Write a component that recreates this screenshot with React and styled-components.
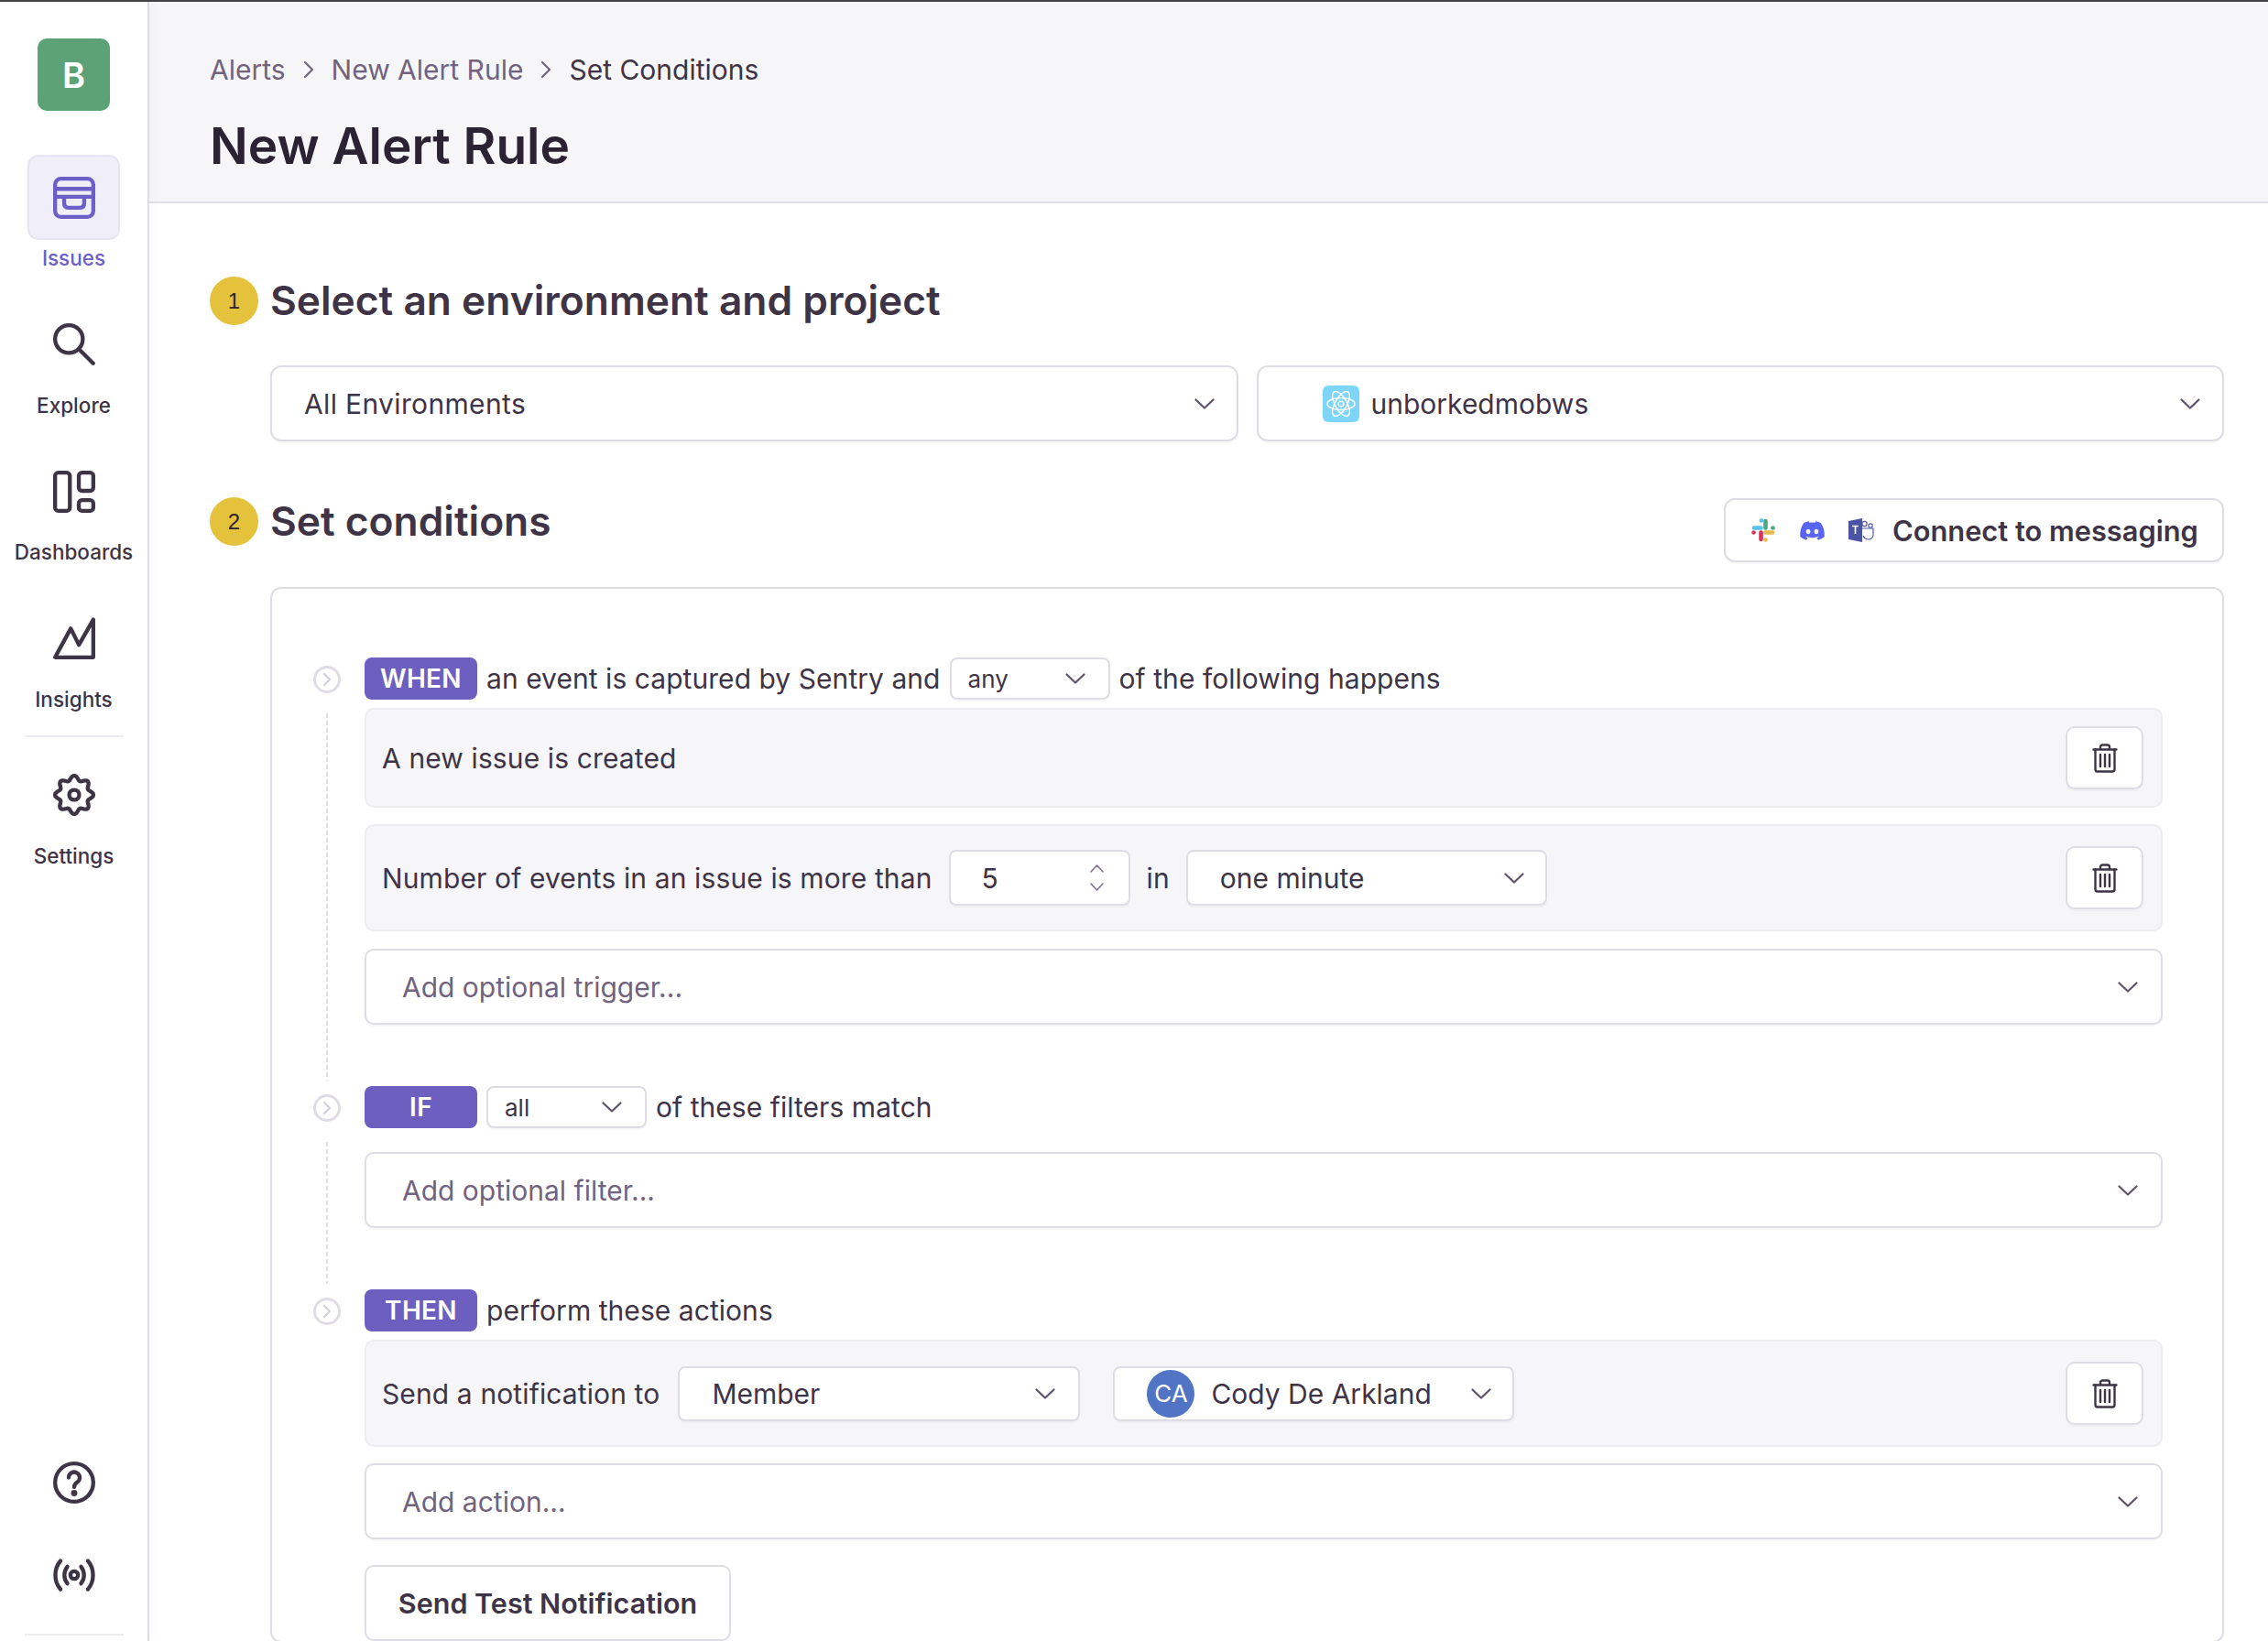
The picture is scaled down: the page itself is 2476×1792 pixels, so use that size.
import React from 'react';
import styled, { createGlobalStyle } from 'styled-components';
import { FaDiscord } from 'react-icons/fa';

const Global = createGlobalStyle`
  html, body { margin: 0; padding: 0; background: #fff; }
  body { font-family: Inter, "Noto Sans", sans-serif; color: #3e3446; }
  * { box-sizing: border-box; }
`;

const Page = styled.div`
  width: 100%; height: 100vh; overflow: hidden; display: flex;
  border-top: 2px solid #444;
`;
const Sidebar = styled.nav`
  width: 163px; flex: none; border-right: 2px solid #e0dce5; padding-top: 40px;
  display: flex; flex-direction: column; align-items: center; background: #fff;
  box-shadow: 2px 0 14px rgba(43,34,51,.03); position: relative;
`;
const Logo = styled.div`
  width: 79px; height: 79px; border-radius: 10px; background: #5da276; color: #fff;
  display: flex; align-items: center; justify-content: center;
  font-size: 38px; font-weight: 600; margin-bottom: 48px;
`;
const NavItem = styled.div`
  display: flex; flex-direction: column; align-items: center; width: 100%;
  height: 160.6px; flex: none; color: ${p => p.$active ? '#6c5fc7' : '#3e3446'};
`;
const NavIcon = styled.div`
  width: 101px; height: 93px; flex: none; display: flex; align-items: center; justify-content: center;
  border-radius: 12px; border: 2px solid ${p => p.$active ? '#e7e5f4' : 'transparent'};
  background: ${p => p.$active ? '#f0eff9' : 'transparent'};
`;
const NavLabel = styled.div`
  font-size: 22.5px; font-weight: 500; line-height: 30px; margin-top: 5px; white-space: nowrap;
`;
const SideRule = styled.div`
  width: 108px; height: 2px; background: #eeecf1; flex: none; margin: ${p => p.$m};
`;
const Spacer = styled.div` flex: 1; `;
const FootIcon = styled.div`
  height: 46px; display: flex; align-items: center; justify-content: center; color: #3e3446; flex: none;
  margin-bottom: ${p => p.$mb}px;
`;

const Main = styled.main` flex: 1; min-width: 0; display: flex; flex-direction: column; `;
const Header = styled.header`
  height: 220px; flex: none; background: #f6f6f8; border-bottom: 2px solid #e2e0e6; padding: 59px 0 0 66px;
`;
const Crumbs = styled.div`
  display: flex; align-items: center; font-size: 30px; line-height: 30px; gap: 19px;
`;
const Crumb = styled.span` color: ${p => p.$current ? '#3e3446' : '#71637e'}; `;
const Title = styled.h1`
  margin: 41px 0 0; font-size: 55px; line-height: 54px; font-weight: 600; color: #2b2233;
`;
const Body = styled.div` padding: 80px 48px 0 66px; `;
const SectionHead = styled.div`
  display: flex; align-items: flex-start; gap: 13px; margin-top: ${p => p.$mt || 0}px;
`;
const StepBadge = styled.div`
  width: 53px; height: 53px; flex: none; border-radius: 50%; background: #e4c23c; color: #2b2233;
  display: flex; align-items: center; justify-content: center; font-family: "Liberation Sans", sans-serif; font-size: 24px;
`;
const SectionTitle = styled.h2`
  margin: 0; font-size: 44.3px; line-height: 53px; font-weight: 600; color: #3e3446;
`;
const Indented = styled.div` margin-left: 66px; `;
const SelectGrid = styled.div`
  display: grid; grid-template-columns: 1fr 1fr; gap: 20px; margin-top: 44px;
`;
const Control = styled.div`
  display: flex; align-items: center; background: #fff; border: 2px solid #e0dce5;
  border-radius: ${p => p.$r || 10}px; box-shadow: 0 2px 0 rgba(43,34,51,.03);
  height: ${p => p.$h}px; width: ${p => p.$w ? p.$w + 'px' : 'auto'};
  padding: 0 ${p => p.$pr || 24}px 0 ${p => p.$pl || 35}px; flex: none;
  font-size: ${p => p.$fs || 30}px; color: ${p => p.$muted ? '#71637e' : '#3e3446'};
  margin-left: ${p => p.$ml || 0}px; margin-top: ${p => p.$mt || 0}px; justify-content: space-between;
`;
const ControlValue = styled.span`
  display: flex; align-items: center; gap: ${p => p.$gap || 0}px; margin-left: ${p => p.$ml || 0}px;
  letter-spacing: ${p => p.$ls || 0}px;
`;
const ProjectBadge = styled.span`
  width: 40px; height: 40px; border-radius: 6px; background: #7dd6f9; display: inline-flex; align-items: center; justify-content: center;
`;
const ConnectRow = styled.div` margin-left: auto; padding-top: 1px; `;
const Connect = styled.button`
  width: 546px; height: 70px; display: flex; align-items: center; padding: 0 0 0 28px; background: #fff;
  border: 2px solid #e0dce5; border-radius: 12px; box-shadow: 0 2px 0 rgba(43,34,51,.03);
  font: 600 30.8px Inter, sans-serif; color: #3e3446; white-space: nowrap;
`;
const ConnectLabel = styled.span` margin-left: 20px; `;
const LogoSlot = styled.span` display: inline-flex; margin-right: ${p => p.$mr}px; `;
const Panel = styled.section`
  margin: 27px 0 0 66px; border: 2px solid #e0dce5; border-radius: 12px; padding: 75px 65px 0 44px; background: #fff;
`;
const Block = styled.div`
  display: grid; grid-template-columns: 31px 1fr; column-gap: 26px; padding-bottom: ${p => p.$pb || 0}px;
`;
const Rail = styled.div` display: flex; flex-direction: column; align-items: center; padding-top: 9px; margin-bottom: ${p => p.$pb ? -p.$pb + 'px' : 0}; `;
const Dot = styled.div`
  width: 30px; height: 30px; flex: none; border: 3px solid #e0dce5; border-radius: 50%;
  display: flex; align-items: center; justify-content: center; color: #d5d0db;
`;
const Dash = styled.div`
  flex: 1; width: 2px; margin: 22px 0 6px;
  background: repeating-linear-gradient(to bottom, #e0dce5 0 5px, transparent 5px 8px);
`;
const Content = styled.div` display: flex; flex-direction: column; min-width: 0; `;
const HeadLine = styled.div`
  display: flex; align-items: center; height: 46px; gap: 10px; font-size: 30px; letter-spacing: .05px;
`;
const Pill = styled.span`
  width: 123px; height: 46px; flex: none; background: #6c5fc0; color: #fff; border-radius: 8px;
  display: flex; align-items: center; justify-content: center; font-size: 28px; font-weight: 600; letter-spacing: .3px;
`;
const Row = styled.div`
  display: flex; align-items: center; gap: 18px; min-height: ${p => p.$h}px; margin-top: ${p => p.$mt}px;
  background: #f6f6f8; border: 2px solid #eeecf1; border-radius: 10px; padding: 0 19px 0 17px; font-size: 30px; letter-spacing: .12px;
`;
const DeleteBtn = styled.button`
  width: 85px; height: 69px; margin-left: auto; flex: none; background: #fff; border: 2px solid #e0dce5; border-radius: 10px;
  display: flex; align-items: center; justify-content: center; padding: 0; box-shadow: 0 2px 0 rgba(43,34,51,.03); color: #3e3446;
`;
const Steppers = styled.span` display: flex; flex-direction: column; gap: 11px; color: #80708f; `;
const TestBtn = styled.button`
  width: 400px; height: 83px; margin-top: 28px; flex: none; background: #fff; border: 2px solid #e0dce5; border-radius: 10px;
  font: 600 30.5px Inter, sans-serif; color: #3e3446; box-shadow: 0 2px 0 rgba(43,34,51,.03); white-space: nowrap;
`;
const Avatar = styled.span`
  width: 52px; height: 52px; border-radius: 50%; background: #5174c4; color: #fff; display: inline-flex; align-items: center; justify-content: center;
  font-size: 26px;
`;

const Icon16 = ({ size = 46, children, sw = 1.5 }) => (
  <svg width={size} height={size} viewBox="0 0 16 16" fill="none" stroke="currentColor" strokeWidth={sw} strokeLinecap="round" strokeLinejoin="round">{children}</svg>
);
const IssuesIcon = () => (
  <Icon16>
    <rect x=".75" y=".75" width="14.5" height="14.5" rx="2.2" />
    <path d="M.75 4.6h14.5M.75 7.6h14.5M4.2 7.6v2.6c0 1 .6 1.6 1.6 1.6h4.4c1 0 1.6-.6 1.6-1.6V7.6" />
  </Icon16>
);
const SearchIcon = () => (
  <Icon16><circle cx="6" cy="6" r="5.25" /><path d="M9.8 9.8l5.4 5.4" /></Icon16>
);
const DashIcon = () => (
  <Icon16>
    <rect x=".75" y=".75" width="5.6" height="14.5" rx="1.2" />
    <rect x="9.75" y=".75" width="5.5" height="6.9" rx="1.2" />
    <rect x="9.75" y="11.2" width="5.5" height="4.05" rx="1.2" />
  </Icon16>
);
const InsightIcon = () => (
  <Icon16><path d="M.75 15.25L6.7 4.3l3.1 6.2L15.25.9v14.35z" /></Icon16>
);
const gearPath = (() => {
  const pts = [];
  for (let i = 0; i < 96; i++) {
    const t = (i / 96) * Math.PI * 2;
    const r = 6.45 + 0.85 * Math.cos(8 * t);
    pts.push(`${(8 + r * Math.sin(t)).toFixed(2)} ${(8 - r * Math.cos(t)).toFixed(2)}`);
  }
  return 'M' + pts.join('L') + 'Z';
})();
const GearIcon = () => (
  <Icon16><path d={gearPath} /><circle cx="8" cy="8" r="1.9" /></Icon16>
);
const HelpIcon = () => (
  <Icon16>
    <circle cx="8" cy="8" r="7.25" />
    <path d="M5.9 6.1a2.1 2.1 0 1 1 3.3 1.75C8.4 8.4 8 8.9 8 9.7" />
    <circle cx="8" cy="12" r=".45" fill="currentColor" />
  </Icon16>
);
const BroadcastIcon = () => (
  <Icon16>
    <circle cx="8" cy="8" r="1.45" />
    <path d="M2.8 2.6C.2 5.6.2 10.4 2.8 13.4M13.2 2.6c2.6 3 2.6 7.8 0 10.8M5.4 4.8c-1.5 1.9-1.5 4.5 0 6.4M10.6 4.8c1.5 1.9 1.5 4.5 0 6.4" />
  </Icon16>
);
const Chevron = ({ w = 22, h = 12 }) => (
  <svg width={w} height={h} viewBox="0 0 22 12" fill="none" stroke="#5f5269" strokeWidth="2.2" strokeLinecap="round" strokeLinejoin="round" preserveAspectRatio="none">
    <path d="M1.5 1.5L11 10.5L20.5 1.5" />
  </svg>
);
const CrumbChevron = () => (
  <svg width="12" height="20" viewBox="0 0 12 20" fill="none" stroke="#71637e" strokeWidth="2.2" strokeLinecap="round" strokeLinejoin="round">
    <path d="M2 2l8 8-8 8" />
  </svg>
);
const DotChevron = () => (
  <svg width="10" height="16" viewBox="0 0 10 16" fill="none" stroke="currentColor" strokeWidth="2.4" strokeLinecap="round" strokeLinejoin="round">
    <path d="M2 2l6 6-6 6" />
  </svg>
);
const Step = ({ up }) => (
  <svg width="15" height="9" viewBox="0 0 15 9" fill="none" stroke="currentColor" strokeWidth="1.6" strokeLinecap="round" strokeLinejoin="round">
    <path d={up ? 'M1 8l6.5-7L14 8' : 'M1 1l6.5 7L14 1'} />
  </svg>
);
const Trash = () => (
  <svg width="28" height="32" viewBox="0 0 28 32" fill="none" stroke="currentColor" strokeWidth="2.4" strokeLinejoin="round" strokeLinecap="round">
    <path d="M1.5 6.5h25M9 6.5V3.8C9 2.3 10 1.5 11.3 1.5h5.4C18 1.5 19 2.3 19 3.8v2.7" />
    <path d="M3.5 6.5v21.8c0 1.4.9 2.2 2.2 2.2h16.6c1.3 0 2.2-.8 2.2-2.2V6.5" />
    <path d="M9 12v13M14 12v13M19 12v13" />
  </svg>
);
const Atom = () => (
  <svg width="34" height="34" viewBox="0 0 34 34" fill="none" stroke="#fff" strokeWidth="1.5">
    <ellipse cx="17" cy="17" rx="15" ry="6.5" />
    <ellipse cx="17" cy="17" rx="15" ry="6.5" transform="rotate(60 17 17)" />
    <ellipse cx="17" cy="17" rx="15" ry="6.5" transform="rotate(120 17 17)" />
    <circle cx="17" cy="17" r="2.8" />
  </svg>
);
const Slack = () => (
  <svg width="26" height="26" viewBox="0 0 26 26" fill="none" strokeWidth="4.6" strokeLinecap="round">
    <path d="M11 2.5v0" stroke="#58c2ea" /><path d="M3 10.5h7.5" stroke="#58c2ea" />
    <path d="M23.5 10.5v0" stroke="#48a785" /><path d="M15.5 3v7.5" stroke="#48a785" />
    <path d="M15.5 23.5v0" stroke="#e6b84d" /><path d="M23 15.5h-7.5" stroke="#e6b84d" />
    <path d="M2.5 15.5v0" stroke="#d6345c" /><path d="M10.5 23v-7.5" stroke="#d6345c" />
  </svg>
);
const Teams = () => (
  <svg width="28" height="28" viewBox="0 0 28 28" fill="none">
    <circle cx="17.5" cy="7" r="2.6" stroke="#5059a8" strokeWidth="1.2" />
    <circle cx="24" cy="9" r="2.2" stroke="#5059a8" strokeWidth="1.2" />
    <path d="M15 12h12v7c0 3-2.4 5-5 5s-5-1.5-6-4" stroke="#5059a8" strokeWidth="1.2" />
    <path d="M0 4l15-3v26L0 24z" fill="#4b53a4" />
    <path d="M4 9.5h7M7.5 9.5v8.5" stroke="#fff" strokeWidth="1.7" />
  </svg>
);

const nav = [
  ['Issues', <IssuesIcon />, true],
  ['Explore', <SearchIcon />],
  ['Dashboards', <DashIcon />],
  ['Insights', <InsightIcon />],
];

export default function App() {
  return (
    <Page>
      <Global />
      <Sidebar>
        <Logo>B</Logo>
        {nav.map(([label, icon, active]) => (
          <NavItem key={label} $active={active}>
            <NavIcon $active={active}>{icon}</NavIcon>
            <NavLabel>{label}</NavLabel>
          </NavItem>
        ))}
        <SideRule $m="-8.4px 0 17px" />
        <NavItem>
          <NavIcon><GearIcon /></NavIcon>
          <NavLabel>Settings</NavLabel>
        </NavItem>
        <Spacer />
        <FootIcon $mb={55}><HelpIcon /></FootIcon>
        <FootIcon $mb={41}><BroadcastIcon /></FootIcon>
        <SideRule $m="0 0 6px" />
      </Sidebar>
      <Main>
        <Header>
          <Crumbs>
            <Crumb>Alerts</Crumb><CrumbChevron />
            <Crumb>New Alert Rule</Crumb><CrumbChevron />
            <Crumb $current>Set Conditions</Crumb>
          </Crumbs>
          <Title>New Alert Rule</Title>
        </Header>
        <Body>
          <SectionHead>
            <StepBadge>1</StepBadge>
            <SectionTitle>Select an environment and project</SectionTitle>
          </SectionHead>
          <Indented>
            <SelectGrid>
              <Control $h={83} $r={12}><ControlValue $ls={0.35}>All Environments</ControlValue><Chevron /></Control>
              <Control $h={83} $r={12}>
                <ControlValue $gap={13} $ml={35}><ProjectBadge><Atom /></ProjectBadge>unborkedmobws</ControlValue><Chevron />
              </Control>
            </SelectGrid>
          </Indented>
          <SectionHead $mt={61}>
            <StepBadge>2</StepBadge>
            <SectionTitle>Set conditions</SectionTitle>
            <ConnectRow>
              <Connect>
                <LogoSlot $mr={26}><Slack /></LogoSlot>
                <LogoSlot $mr={25}><FaDiscord size={29} color="#5865f2" /></LogoSlot>
                <LogoSlot $mr={0}><Teams /></LogoSlot>
                <ConnectLabel>Connect to messaging</ConnectLabel>
              </Connect>
            </ConnectRow>
          </SectionHead>
          <Panel>
            <Block $pb={67}>
              <Rail $pb={67}><Dot><DotChevron /></Dot><Dash /></Rail>
              <Content>
                <HeadLine>
                  <Pill>WHEN</Pill>
                  <span>an event is captured by Sentry and</span>
                  <Control $h={46} $w={175} $fs={26} $r={8} $pl={18} $pr={25}><ControlValue>any</ControlValue><Chevron /></Control>
                  <span>of the following happens</span>
                </HeadLine>
                <Row $h={109} $mt={9}>
                  <span>A new issue is created</span>
                  <DeleteBtn aria-label="Delete"><Trash /></DeleteBtn>
                </Row>
                <Row $h={117} $mt={18}>
                  <span>Number of events in an issue is more than</span>
                  <Control $h={61} $w={198} $r={8} $pl={34} $pr={27}>
                    <ControlValue>5</ControlValue>
                    <Steppers><Step up /><Step /></Steppers>
                  </Control>
                  <span>in</span>
                  <Control $h={61} $w={394} $r={8} $pr={23}><ControlValue>one minute</ControlValue><Chevron /></Control>
                  <DeleteBtn aria-label="Delete"><Trash /></DeleteBtn>
                </Row>
                <Control $h={83} $mt={19} $r={10} $muted $pl={39} $pr={25}><ControlValue>Add optional trigger...</ControlValue><Chevron /></Control>
              </Content>
            </Block>
            <Block $pb={67}>
              <Rail $pb={67}><Dot><DotChevron /></Dot><Dash /></Rail>
              <Content>
                <HeadLine>
                  <Pill>IF</Pill>
                  <Control $h={46} $w={175} $fs={26} $r={8} $pl={18} $pr={25}><ControlValue>all</ControlValue><Chevron /></Control>
                  <span>of these filters match</span>
                </HeadLine>
                <Control $h={83} $mt={26} $r={10} $muted $pl={39} $pr={25}><ControlValue>Add optional filter...</ControlValue><Chevron /></Control>
              </Content>
            </Block>
            <Block>
              <Rail><Dot><DotChevron /></Dot></Rail>
              <Content>
                <HeadLine>
                  <Pill>THEN</Pill>
                  <span>perform these actions</span>
                </HeadLine>
                <Row $h={117} $mt={9}>
                  <span>Send a notification to</span>
                  <Control $h={60} $w={439} $r={8} $pr={25} $ml={2}><ControlValue>Member</ControlValue><Chevron /></Control>
                  <Control $h={60} $w={438} $r={8} $ml={18} $pl={35} $pr={23}><ControlValue $gap={18}><Avatar>CA</Avatar>Cody De Arkland</ControlValue><Chevron /></Control>
                  <DeleteBtn aria-label="Delete"><Trash /></DeleteBtn>
                </Row>
                <Control $h={83} $mt={18} $r={10} $muted $pl={39} $pr={25}><ControlValue>Add action...</ControlValue><Chevron /></Control>
                <div><TestBtn>Send Test Notification</TestBtn></div>
              </Content>
            </Block>
          </Panel>
        </Body>
      </Main>
    </Page>
  );
}
